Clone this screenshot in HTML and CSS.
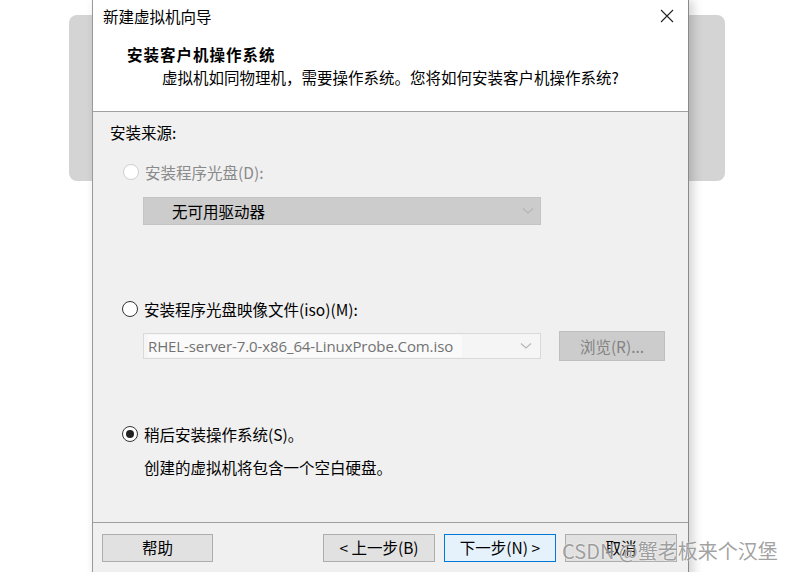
FILE: index.html
```html
<!DOCTYPE html>
<html lang="zh-CN">
<head>
<meta charset="utf-8">
<title>新建虚拟机向导</title>
<link rel="stylesheet" href="styles.css">
</head>
<body>
<div class="desk">
  <div class="card"></div>
  <div class="dialog">
    <div class="titlebar">
      <span class="title">新建虚拟机向导</span>
      <svg class="close" width="14" height="14" viewBox="0 0 14 14"><path d="M1 1 L13 13 M13 1 L1 13" stroke="#222" stroke-width="1.1" fill="none"/></svg>
    </div>
    <div class="header">
      <div class="heading">安装客户机操作系统</div>
      <div class="sub">虚拟机如同物理机，需要操作系统。您将如何安装客户机操作系统?</div>
    </div>
    <div class="content">
      <div class="label">安装来源:</div>
      <div class="radio-row disabled first">
        <span class="radio off"></span><span>安装程序光盘(D):</span>
      </div>
      <div class="select disabled-select">
        <span class="select-text">无可用驱动器</span>
        <svg class="chev" width="12" height="8" viewBox="0 0 12 8"><path d="M1 1.5 L6 6 L11 1.5" stroke="#b4b4b4" stroke-width="1.1" fill="none"/></svg>
      </div>
      <div class="radio-row second">
        <span class="radio"></span><span>安装程序光盘映像文件(iso)(M):</span>
      </div>
      <div class="iso-row">
        <div class="combo">
          <span class="combo-text">RHEL-server-7.0-x86_64-LinuxProbe.Com.iso</span>
          <svg class="chev" width="12" height="8" viewBox="0 0 12 8"><path d="M1 1.5 L6 6 L11 1.5" stroke="#b4b4b4" stroke-width="1.1" fill="none"/></svg>
        </div>
        <div class="browse">浏览(R)...</div>
      </div>
      <div class="radio-row third">
        <span class="radio on"></span><span>稍后安装操作系统(S)。</span>
      </div>
      <div class="desc">创建的虚拟机将包含一个空白硬盘。</div>
    </div>
    <div class="footer">
      <div class="btn help">帮助</div>
      <div class="spacer"></div>
      <div class="btn">&lt; 上一步(B)</div>
      <div class="btn primary">下一步(N) &gt;</div>
      <div class="btn">取消</div>
    </div>
  </div>
  <div class="watermark">CSDN @蟹老板来个汉堡</div>
</div>
</body>
</html>
```

FILE: styles.css
```css
* { box-sizing: border-box; }
html, body {
  margin: 0;
  padding: 0;
  background: #ffffff;
  overflow: hidden;
}
body {
  font-family: "Noto Sans CJK SC", "Noto Sans", sans-serif;
  font-size: 15.5px;
  color: #000;
}
.desk {
  position: relative;
  width: 791px;
  height: 572px;
  overflow: hidden;
}
.card {
  position: absolute;
  left: 69px;
  top: 15px;
  width: 656px;
  height: 166px;
  background: #d4d4d4;
  border-radius: 8px;
}
.dialog {
  position: absolute;
  left: 92px;
  top: 0;
  width: 597px;
  height: 590px;
  background: #f0f0f0;
  border-left: 1px solid #9a9a9a;
  border-right: 1px solid #8a8a8a;
  box-shadow: 4px 0 10px rgba(0,0,0,0.18);
}
.titlebar {
  height: 32px;
  background: #fff;
  display: flex;
  align-items: center;
  justify-content: space-between;
  padding: 0 14px 0 10px;
}
.title {
  line-height: 20px;
}
.close { display: block; }
.header {
  height: 80px;
  background: #fff;
  border-bottom: 1px solid #a0a0a0;
  padding: 12px 0 0 34px;
}
.heading {
  font-weight: bold;
  font-size: 15.5px;
  line-height: 20px;
  letter-spacing: 1px;
}
.sub {
  margin-top: 3px;
  padding-left: 35px;
  line-height: 20px;
}
.content {
  height: 410px;
  padding: 10px 0 0 17px;
}
.label { line-height: 20px; }
.radio-row {
  display: flex;
  align-items: center;
  gap: 6px;
  height: 20px;
  line-height: 20px;
  padding-left: 12px;
}
.radio-row.first { margin-top: 20px; padding-left: 13px; }
.radio-row.second { margin-top: 74px; }
.radio-row.third { margin-top: 63px; }
.radio-row.disabled { color: #8a8a8a; }
.radio {
  width: 16px;
  height: 16px;
  border-radius: 50%;
  border: 1px solid #333;
  background: #fff;
  flex: none;
  position: relative;
}
.radio.off { border-color: #d0d0d0; }
.radio.on::after {
  content: "";
  position: absolute;
  left: 3px;
  top: 3px;
  width: 8px;
  height: 8px;
  border-radius: 50%;
  background: #222;
}
.select {
  margin: 15px 0 0 33px;
  width: 398px;
  height: 28px;
  display: flex;
  align-items: center;
  justify-content: space-between;
  padding: 0 6px 0 28px;
}
.disabled-select {
  background: #cccccc;
  border: 1px solid #c4c4c4;
}
.chev { display: block; }
.iso-row {
  margin: 12px 0 0 33px;
  display: flex;
  align-items: center;
  gap: 18px;
}
.combo {
  width: 398px;
  height: 26px;
  border: 1px solid #d9d9d9;
  background: #f5f5f5;
  display: flex;
  align-items: center;
  justify-content: space-between;
  padding: 0 8px 0 4px;
}
.combo-text {
  color: #727272;
  font-family: "Open Sans", "Noto Sans", sans-serif;
  font-size: 15px;
  letter-spacing: -0.1px;
  background: #fafafa;
  width: 314px;
  line-height: 22px;
}
.browse {
  width: 106px;
  height: 30px;
  background: #cccccc;
  border: 1px solid #bfbfbf;
  color: #838383;
  display: flex;
  align-items: center;
  justify-content: center;
}
.desc {
  margin: 13px 0 0 34px;
  line-height: 20px;
}
.footer {
  border-top: 1px solid #a0a0a0;
  padding: 11px 11px 0 9px;
  display: flex;
  gap: 9px;
}
.spacer { flex: 1; }
.btn {
  width: 112px;
  height: 28px;
  background: #e1e1e1;
  border: 1px solid #adadad;
  display: flex;
  align-items: center;
  justify-content: center;
  line-height: 20px;
  padding-bottom: 2px;
}
.btn.help { width: 111px; }
.btn.primary {
  background: #e5f1fb;
  border: 1px solid #0078d7;
}
.watermark {
  position: absolute;
  left: 562px;
  top: 538px;
  font-size: 20px;
  line-height: 26px;
  color: rgba(120,120,120,0.7);
  text-shadow: 0 0 2px #fff;
  white-space: nowrap;
}
```
